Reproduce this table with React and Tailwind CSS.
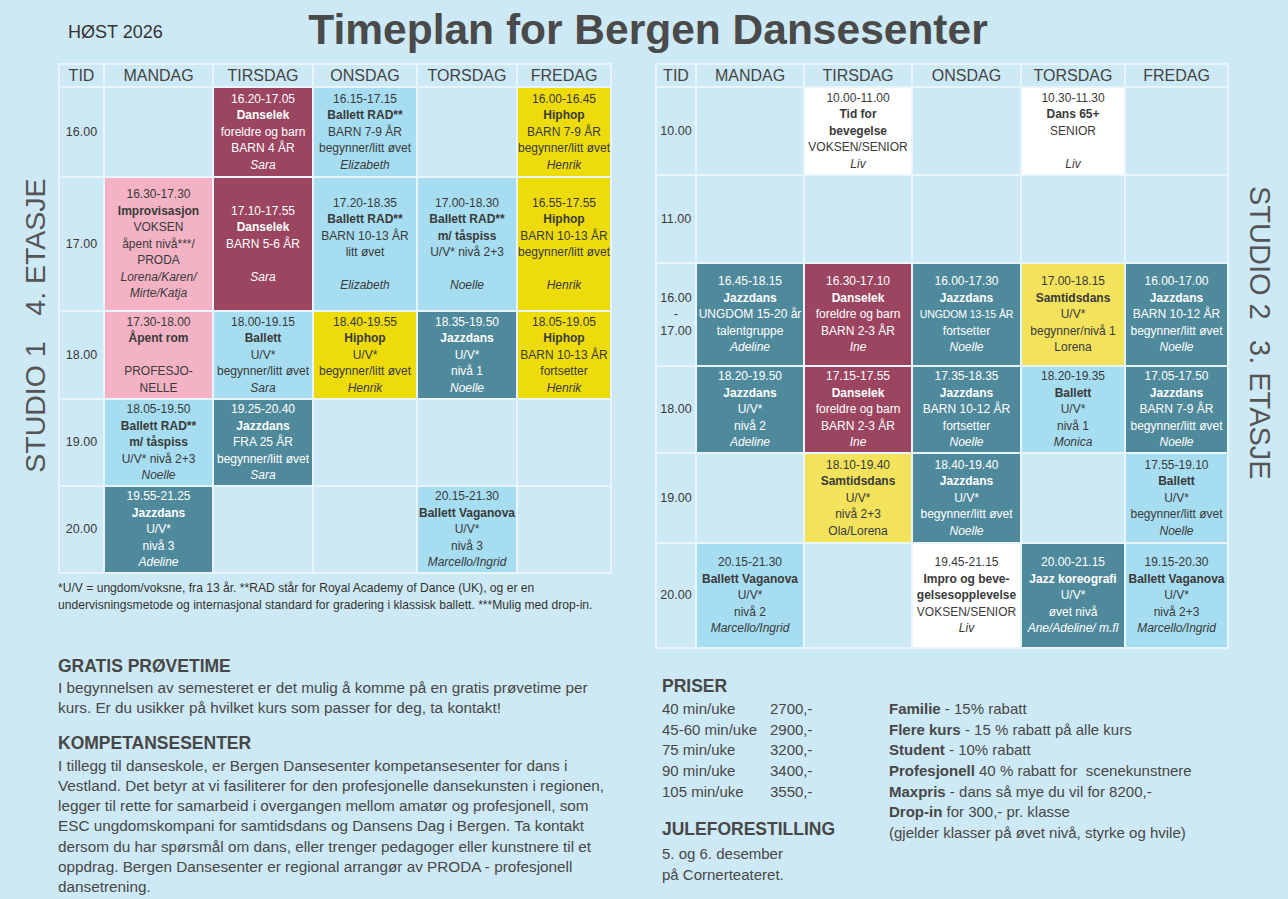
import React from "react";

const C = {
  cy: "bg-[#a6ddf1] text-[#3a3a3a]",
  te: "bg-[#4f8a9c] text-white",
  ma: "bg-[#9c4561] text-white",
  pi: "bg-[#f4b3c5] text-[#3a3a3a]",
  ye: "bg-[#eedb0c] text-[#3a3a3a]",
  yl: "bg-[#f3e35c] text-[#3a3a3a]",
  wh: "bg-white text-[#3a3a3a]",
  e: "bg-[#cde9f5]",
};

const B = (t) => ({ b: t });
const I = (t) => ({ i: t });
const S = (t) => ({ s: t });
const E = { c: "e", l: [] };

const leftRows = [
  {
    t: ["16.00"],
    cells: [
      E,
      { c: "ma", l: ["16.20-17.05", B("Danselek"), "foreldre og barn", "BARN 4 ÅR", I("Sara")] },
      { c: "cy", l: ["16.15-17.15", B("Ballett RAD**"), "BARN 7-9 ÅR", "begynner/litt øvet", I("Elizabeth")] },
      E,
      { c: "ye", l: ["16.00-16.45", B("Hiphop"), "BARN 7-9 ÅR", "begynner/litt øvet", I("Henrik")] },
    ],
  },
  {
    t: ["17.00"],
    cells: [
      { c: "pi", l: ["16.30-17.30", B("Improvisasjon"), "VOKSEN", "åpent nivå***/", "PRODA", I("Lorena/Karen/"), I("Mirte/Katja")] },
      { c: "ma", l: ["17.10-17.55", B("Danselek"), "BARN 5-6 ÅR", "", I("Sara")] },
      { c: "cy", l: ["17.20-18.35", B("Ballett RAD**"), "BARN 10-13 ÅR", "litt øvet", "", I("Elizabeth")] },
      { c: "cy", l: ["17.00-18.30", B("Ballett RAD**"), B("m/ tåspiss"), "U/V* nivå 2+3", "", I("Noelle")] },
      { c: "ye", l: ["16.55-17.55", B("Hiphop"), "BARN 10-13 ÅR", "begynner/litt øvet", "", I("Henrik")] },
    ],
  },
  {
    t: ["18.00"],
    cells: [
      { c: "pi", l: ["17.30-18.00", B("Åpent rom"), "", "PROFESJO-", "NELLE"] },
      { c: "cy", l: ["18.00-19.15", B("Ballett"), "U/V*", "begynner/litt øvet", I("Sara")] },
      { c: "ye", l: ["18.40-19.55", B("Hiphop"), "U/V*", "begynner/litt øvet", I("Henrik")] },
      { c: "te", l: ["18.35-19.50", B("Jazzdans"), "U/V*", "nivå 1", I("Noelle")] },
      { c: "ye", l: ["18.05-19.05", B("Hiphop"), "BARN 10-13 ÅR", "fortsetter", I("Henrik")] },
    ],
  },
  {
    t: ["19.00"],
    cells: [
      { c: "cy", l: ["18.05-19.50", B("Ballett RAD**"), B("m/ tåspiss"), "U/V* nivå 2+3", I("Noelle")] },
      { c: "te", l: ["19.25-20.40", B("Jazzdans"), "FRA 25 ÅR", "begynner/litt øvet", I("Sara")] },
      E,
      E,
      E,
    ],
  },
  {
    t: ["20.00"],
    cells: [
      { c: "te", l: ["19.55-21.25", B("Jazzdans"), "U/V*", "nivå 3", I("Adeline")] },
      E,
      E,
      { c: "cy", l: ["20.15-21.30", B("Ballett Vaganova"), "U/V*", "nivå 3", I("Marcello/Ingrid")] },
      E,
    ],
  },
];

const rightRows = [
  {
    t: ["10.00"],
    cells: [
      E,
      { c: "wh", l: ["10.00-11.00", B("Tid for"), B("bevegelse"), "VOKSEN/SENIOR", I("Liv")] },
      E,
      { c: "wh", l: ["10.30-11.30", B("Dans 65+"), "SENIOR", "", I("Liv")] },
      E,
    ],
  },
  { t: ["11.00"], cells: [E, E, E, E, E] },
  {
    t: ["16.00", "-", "17.00"],
    cells: [
      { c: "te", l: ["16.45-18.15", B("Jazzdans"), "UNGDOM 15-20 år", "talentgruppe", I("Adeline")] },
      { c: "ma", l: ["16.30-17.10", B("Danselek"), "foreldre og barn", "BARN 2-3 ÅR", I("Ine")] },
      { c: "te", l: ["16.00-17.30", B("Jazzdans"), S("UNGDOM 13-15 ÅR"), "fortsetter", I("Noelle")] },
      { c: "yl", l: ["17.00-18.15", B("Samtidsdans"), "U/V*", "begynner/nivå 1", "Lorena"] },
      { c: "te", l: ["16.00-17.00", B("Jazzdans"), "BARN 10-12 ÅR", "begynner/litt øvet", I("Noelle")] },
    ],
  },
  {
    t: ["18.00"],
    cells: [
      { c: "te", l: ["18.20-19.50", B("Jazzdans"), "U/V*", "nivå 2", I("Adeline")] },
      { c: "ma", l: ["17.15-17.55", B("Danselek"), "foreldre og barn", "BARN 2-3 ÅR", I("Ine")] },
      { c: "te", l: ["17.35-18.35", B("Jazzdans"), "BARN 10-12 ÅR", "fortsetter", I("Noelle")] },
      { c: "cy", l: ["18.20-19.35", B("Ballett"), "U/V*", "nivå 1", I("Monica")] },
      { c: "te", l: ["17.05-17.50", B("Jazzdans"), "BARN 7-9 ÅR", "begynner/litt øvet", I("Noelle")] },
    ],
  },
  {
    t: ["19.00"],
    cells: [
      E,
      { c: "yl", l: ["18.10-19.40", B("Samtidsdans"), "U/V*", "nivå 2+3", "Ola/Lorena"] },
      { c: "te", l: ["18.40-19.40", B("Jazzdans"), "U/V*", "begynner/litt øvet", I("Noelle")] },
      E,
      { c: "cy", l: ["17.55-19.10", B("Ballett"), "U/V*", "begynner/litt øvet", I("Noelle")] },
    ],
  },
  {
    t: ["20.00"],
    cells: [
      { c: "cy", l: ["20.15-21.30", B("Ballett Vaganova"), "U/V*", "nivå 2", I("Marcello/Ingrid")] },
      E,
      { c: "wh", l: ["19.45-21.15", B("Impro og beve-"), B("gelsesopplevelse"), "VOKSEN/SENIOR", I("Liv")] },
      { c: "te", l: ["20.00-21.15", B("Jazz koreografi"), "U/V*", "øvet nivå", I("Ane/Adeline/ m.fl")] },
      { c: "cy", l: ["19.15-20.30", B("Ballett Vaganova"), "U/V*", "nivå 2+3", I("Marcello/Ingrid")] },
    ],
  },
];

const days = ["TID", "MANDAG", "TIRSDAG", "ONSDAG", "TORSDAG", "FREDAG"];

function Line({ v }) {
  if (v === "") return <div className="h-[16.5px]" />;
  if (typeof v === "string") return <div>{v}</div>;
  if (v.b) return <div className="font-bold">{v.b}</div>;
  if (v.i) return <div className="italic">{v.i}</div>;
  if (v.s) return <div className="text-[10.5px] tracking-[-0.1px]">{v.s}</div>;
  return null;
}

function Table({ rows, gridClass }) {
  return (
    <div className={`grid gap-[2px] p-[2px] bg-[#e8f5fb] ${gridClass}`}>
      {days.map((d) => (
        <div key={d} className="bg-[#cde9f5] flex items-center justify-center text-[16px] text-[#444]">
          {d}
        </div>
      ))}
      {rows.map((r, ri) => (
        <React.Fragment key={ri}>
          <div className="bg-[#cde9f5] flex flex-col items-center justify-center text-[12.5px] leading-[16.5px] text-[#3a3a3a]">
            {r.t.map((x, i) => (
              <div key={i}>{x}</div>
            ))}
          </div>
          {r.cells.map((cell, ci) => (
            <div
              key={ci}
              className={`${C[cell.c]} flex flex-col items-center justify-center text-center text-[12px] leading-[16.5px] whitespace-nowrap`}
            >
              {cell.l.map((v, li) => (
                <Line key={li} v={v} />
              ))}
            </div>
          ))}
        </React.Fragment>
      ))}
    </div>
  );
}

export default function App() {
  return (
    <div className="w-[1288px] h-[899px] overflow-hidden bg-[#cde9f5] text-[#474747] font-['Liberation_Sans',Arial,sans-serif]">
      <header className="h-[63px] grid grid-cols-[1fr_auto_1fr]">
        <div className="pl-[68px] pt-[23px] text-[18px] leading-none text-[#333]">HØST 2026</div>
        <h1 className="pt-[9px] pl-[8px] text-[42.5px] leading-none font-bold text-[#4a4a4a]">
          Timeplan for Bergen Dansesenter
        </h1>
        <div />
      </header>

      <div className="flex">
        <div className="w-[58px] h-[511px] flex items-center justify-center pt-[14px] pl-[12px]">
          <div className="[writing-mode:vertical-rl] rotate-180 text-[28.5px] leading-none text-[#555] whitespace-nowrap">
            <span>STUDIO 1</span>
            <span className="ms-[26px]">4. ETASJE</span>
          </div>
        </div>

        <div className="w-[554px] flex flex-col">
          <Table
            rows={leftRows}
            gridClass="grid-cols-[43px_107px_98px_102px_98px_92px] grid-rows-[21px_88px_132px_86px_85px_85px]"
          />
          <p className="mt-[6px] text-[12.1px] leading-[17px] text-[#333] whitespace-nowrap">
            *U/V = ungdom/voksne, fra 13 år. **RAD står for Royal Academy of Dance (UK), og er en
            <br />
            undervisningsmetode og internasjonal standard for gradering i klassisk ballett. ***Mulig med drop-in.
          </p>
          <h2 className="mt-[42px] text-[17.5px] leading-[20px] font-bold">GRATIS PRØVETIME</h2>
          <p className="mt-[2px] text-[15.3px] leading-[20.3px] whitespace-nowrap">
            I begynnelsen av semesteret er det mulig å komme på en gratis prøvetime per
            <br />
            kurs. Er du usikker på hvilket kurs som passer for deg, ta kontakt!
          </p>
          <h2 className="mt-[14px] text-[17.5px] leading-[20px] font-bold">KOMPETANSESENTER</h2>
          <p className="mt-[3px] text-[15.3px] leading-[20.3px] whitespace-nowrap">
            I tillegg til danseskole, er Bergen Dansesenter kompetansesenter for dans i
            <br />
            Vestland. Det betyr at vi fasiliterer for den profesjonelle dansekunsten i regionen,
            <br />
            legger til rette for samarbeid i overgangen mellom amatør og profesjonell, som
            <br />
            ESC ungdomskompani for samtidsdans og Dansens Dag i Bergen. Ta kontakt
            <br />
            dersom du har spørsmål om dans, eller trenger pedagoger eller kunstnere til et
            <br />
            oppdrag. Bergen Dansesenter er regional arrangør av PRODA - profesjonell
            <br />
            dansetrening.
          </p>
        </div>

        <div className="w-[43px]" />

        <div className="w-[574px] flex flex-col">
          <Table
            rows={rightRows}
            gridClass="grid-cols-[38px_106px_106px_107px_102px_101px] grid-rows-[21px_86px_86px_101px_85px_88px_103px]"
          />
          <div className="flex pl-[7px] mt-[27px]">
            <div className="w-[227px] flex flex-col">
              <h2 className="text-[17.5px] leading-[20px] font-bold">PRISER</h2>
              <div className="mt-[3px] grid grid-cols-[108px_1fr] text-[15px] leading-[20.67px]">
                <div>40 min/uke</div>
                <div>2700,-</div>
                <div>45-60 min/uke</div>
                <div>2900,-</div>
                <div>75 min/uke</div>
                <div>3200,-</div>
                <div>90 min/uke</div>
                <div>3400,-</div>
                <div>105 min/uke</div>
                <div>3550,-</div>
              </div>
              <h2 className="mt-[17px] text-[17.5px] leading-[20px] font-bold">JULEFORESTILLING</h2>
              <p className="mt-[5px] text-[15px] leading-[20.67px]">
                5. og 6. desember
                <br />
                på Cornerteateret.
              </p>
            </div>
            <div className="pt-[23px] text-[15px] leading-[20.67px] whitespace-nowrap">
              <div>
                <b>Familie</b> - 15% rabatt
              </div>
              <div>
                <b>Flere kurs</b> - 15 % rabatt på alle kurs
              </div>
              <div>
                <b>Student</b> - 10% rabatt
              </div>
              <div>
                <b>Profesjonell</b> 40 % rabatt for&nbsp; scenekunstnere
              </div>
              <div>
                <b>Maxpris</b> - dans så mye du vil for 8200,-
              </div>
              <div>
                <b>Drop-in</b> for 300,- pr. klasse
              </div>
              <div>(gjelder klasser på øvet nivå, styrke og hvile)</div>
            </div>
          </div>
        </div>

        <div className="flex-1 h-[587px] flex items-center justify-center pb-[48px] pl-[2px]">
          <div className="[writing-mode:vertical-rl] text-[29px] leading-none text-[#555] whitespace-nowrap">
            <span>STUDIO 2</span>
            <span className="ms-[20px]">3. ETASJE</span>
          </div>
        </div>
      </div>
    </div>
  );
}
